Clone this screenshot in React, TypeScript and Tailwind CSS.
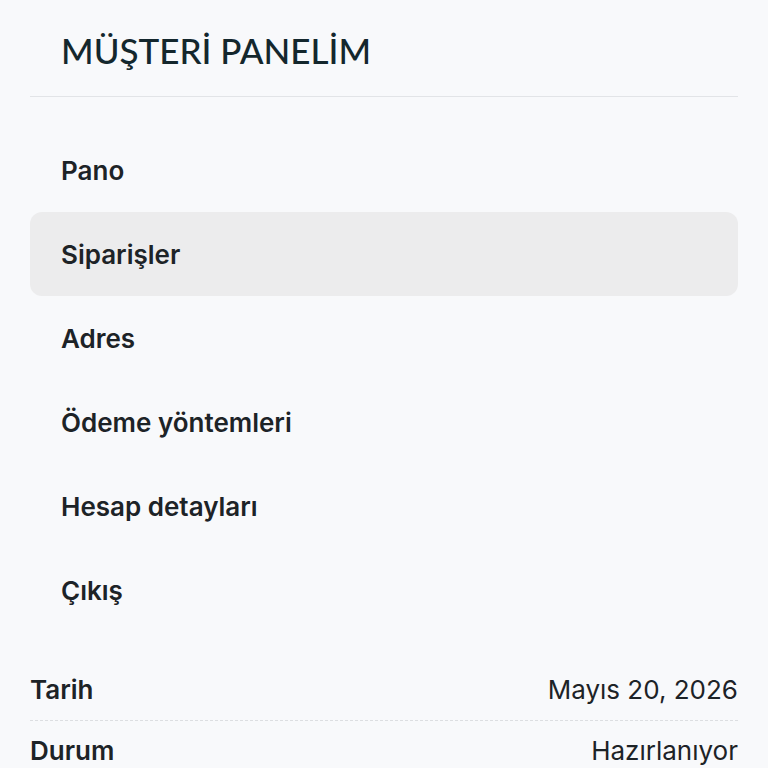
import React from 'react';

const navItems = ['Pano', 'Siparişler', 'Adres', 'Ödeme yöntemleri', 'Hesap detayları', 'Çıkış'];

export default function App() {
  const active = 'Siparişler';

  return (
    <div className="min-h-screen bg-[#f8f9fb] text-[#1d2327] px-[30px]" style={{ fontFamily: 'Inter, "Noto Sans", sans-serif' }}>
      {/* Panel heading */}
      <div className="pt-[28px] pb-[24px] px-[31px] border-b border-[#e2e4e7]">
        <h2 className="text-[35px] leading-[44px] font-medium text-[#14272d]" style={{ fontFamily: 'Lato, sans-serif' }}>
          MÜŞTERİ PANELİM
        </h2>
      </div>

      {/* Navigation */}
      <nav className="pt-[31px] flex flex-col">
        {navItems.map(item => (
          <a
            key={item}
            href="#"
            className={`h-[84px] flex items-center px-[31px] rounded-xl text-[26px] font-semibold ${
              item === active ? 'bg-[#ececed]' : ''
            }`}
          >
            {item}
          </a>
        ))}
      </nav>

      {/* Order details */}
      <div className="mt-[38px] flex flex-col">
        <div className="flex items-center justify-between pb-[11px] border-b border-dashed border-[#dcdee1]">
          <span className="text-[26px] font-semibold">Tarih</span>
          <span className="text-[26px]">Mayıs 20, 2026</span>
        </div>
        <div className="flex items-center justify-between pt-[10px]">
          <span className="text-[26px] font-semibold">Durum</span>
          <span className="text-[26px]">Hazırlanıyor</span>
        </div>
      </div>
    </div>
  );
}
